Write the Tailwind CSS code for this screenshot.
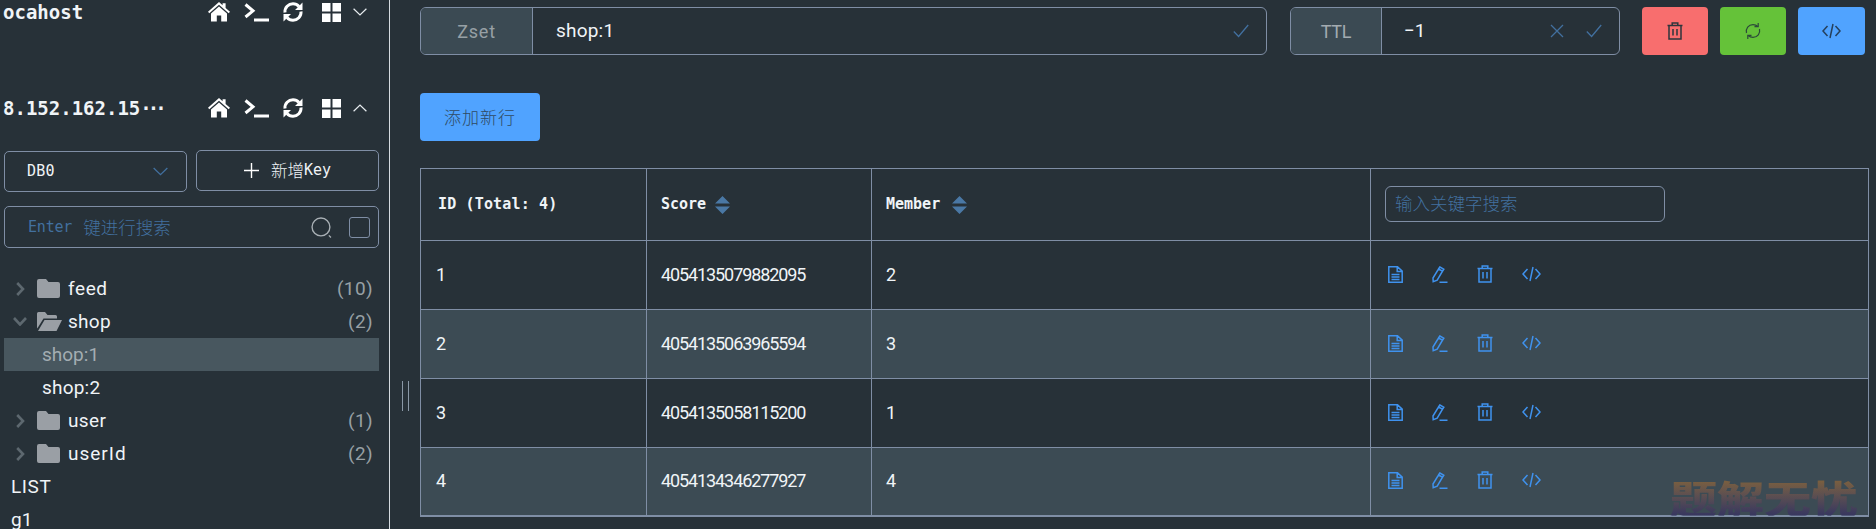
<!DOCTYPE html>
<html lang="en">
<head>
  <meta charset="UTF-8" />
  <title>Redis Desktop</title>
  <script src="https://cdn.jsdelivr.net/npm/@tailwindcss/browser@4"></script>
</head>
<body class="relative w-[1876px] h-[529px] overflow-hidden flex bg-[#273138] text-[#f0f4f7] font-['Roboto','Noto_Sans_CJK_SC',sans-serif]">

  <!-- shared icons -->
  <svg class="hidden">
    <symbol id="home" viewBox="0 0 22 20"><path fill="currentColor" d="M11 0 14.6 3.2V1.2H17.6V5.9L22 9.8 20.7 11.2 11 2.8 1.3 11.2 0 9.8ZM11 4.6 19 11.5V19.5H13.2V13.6H8.8V19.5H3V11.5Z"/></symbol>
    <symbol id="term" viewBox="0 0 25 20"><path fill="none" stroke="currentColor" stroke-width="3" d="M1.5 2.5 9 8.8 1.5 15"/><path fill="currentColor" d="M10 16.5H25V19.5H10Z"/></symbol>
    <symbol id="sync" viewBox="0 0 20 20"><path fill="none" stroke="currentColor" stroke-width="3" d="M2 10.5C1.5 5.5 5.5 1.8 10 1.8 12.5 1.8 14.5 2.8 16 4.5M18 9.5C18.5 14.5 14.5 18.2 10 18.2 7.5 18.2 5.5 17.2 4 15.5"/><path fill="currentColor" d="M19.5 0.5V8H12ZM0.5 19.5V12H8Z"/></symbol>
    <symbol id="grid" viewBox="0 0 19 19"><path fill="currentColor" d="M0 0H8.5V8.5H0ZM10.5 0H19V8.5H10.5ZM0 10.5H8.5V19H0ZM10.5 10.5H19V19H10.5Z"/></symbol>
    <symbol id="down" viewBox="0 0 14 8"><path fill="none" stroke="currentColor" stroke-width="1.2" d="M.6.8 7 7 13.4.8"/></symbol>
    <symbol id="right" viewBox="0 0 9 14"><path fill="none" stroke="currentColor" stroke-width="2.6" d="M1.2 1 7 7 1.2 13"/></symbol>
    <symbol id="folder" viewBox="0 0 23 19"><path fill="currentColor" d="M2 0H9L11.5 3H21A2 2 0 0 1 23 5V17A2 2 0 0 1 21 19H2A2 2 0 0 1 0 17V2A2 2 0 0 1 2 0Z"/></symbol>
    <symbol id="open" viewBox="0 0 25 19"><path fill="currentColor" d="M1.5 0H8L10.5 3H18.5A1.5 1.5 0 0 1 20 4.5V6.5H6.5L1.2 15 0 16.5V1.5A1.5 1.5 0 0 1 1.5 0ZM7.5 8H25L19.5 19H1Z"/></symbol>
    <symbol id="check" viewBox="0 0 16 14"><path fill="none" stroke="currentColor" stroke-width="1.3" d="M.8 7.5 5.6 12.5 15.2 1"/></symbol>
    <symbol id="close" viewBox="0 0 14 14"><path fill="none" stroke="currentColor" stroke-width="1.3" d="M1 1 13 13M13 1 1 13"/></symbol>
    <symbol id="doc" viewBox="0 0 15 17"><path fill="none" stroke="currentColor" stroke-width="1.5" d="M.8.8H9.5L14.2 5.2V16.2H.8ZM9.2.8V5.5H14M3.5 8.5H11.5M3.5 11H11.5M3.5 13.6H11.5"/></symbol>
    <symbol id="edit" viewBox="0 0 16 17"><path fill="none" stroke="currentColor" stroke-width="1.5" d="M6.5 3 10.5 5.2 5.2 14.2 1.2 15.6 1 12ZM7.8 1 11.8 3.2 10.5 5.2 6.5 3ZM7.5 16.2H15.5"/></symbol>
    <symbol id="trash" viewBox="0 0 16 18"><path fill="none" stroke="currentColor" stroke-width="1.5" d="M.5 3.5H15.5M5.2 3.5V1H10.8V3.5M2 3.5V17H14V3.5M6 7V13.5M10 7V13.5"/></symbol>
    <symbol id="code" viewBox="0 0 19 16"><path fill="none" stroke="currentColor" stroke-width="1.5" d="M5.5 3 1 8 5.5 13M13.5 3 18 8 13.5 13M11 1 8 15"/></symbol>
    <symbol id="reload" viewBox="0 0 16 18"><path fill="none" stroke="currentColor" stroke-width="1.2" d="M1.5 11C.5 6.5 3.5 2.6 8 2.6 10 2.6 11.5 3.2 13 4.5M14.5 7C15.5 11.5 12.5 15.4 8 15.4 6 15.4 4.5 14.8 3 13.5"/><path fill="none" stroke="currentColor" stroke-width="1.2" d="M13.2 1V4.7H9.5M2.8 17V13.3H6.5"/></symbol>
  </svg>

  <aside class="w-[390px] h-full shrink-0 border-r border-[#d5dbe0] overflow-hidden">
    <div class="h-6 mb-[72px] flex items-center pl-[3px]">
      <span class="w-[205px] font-['DejaVu_Sans_Mono'] font-bold text-[19px]">ocahost</span>
      <svg class="w-[22px] h-5 text-white"><use href="#home"/></svg>
      <svg class="w-[25px] h-5 ml-[14px] text-white"><use href="#term"/></svg>
      <svg class="w-5 h-5 ml-[14px] text-white"><use href="#sync"/></svg>
      <svg class="w-[19px] h-[19px] ml-[19px] text-white"><use href="#grid"/></svg>
      <svg class="w-[14px] h-2 ml-[12px] text-[#e8edf0]"><use href="#down"/></svg>
    </div>
    <div class="h-6 flex items-center pl-[3px]">
      <span class="w-[205px] font-['DejaVu_Sans_Mono'] font-bold text-[19px] whitespace-nowrap">8.152.162.15<span class="tracking-[-4px]">···</span></span>
      <svg class="w-[22px] h-5 text-white"><use href="#home"/></svg>
      <svg class="w-[25px] h-5 ml-[14px] text-white"><use href="#term"/></svg>
      <svg class="w-5 h-5 ml-[14px] text-white"><use href="#sync"/></svg>
      <svg class="w-[19px] h-[19px] ml-[19px] text-white"><use href="#grid"/></svg>
      <svg class="w-[14px] h-2 ml-[12px] rotate-180 text-[#e8edf0]"><use href="#down"/></svg>
    </div>

    <div class="mt-[30px] mx-1 flex items-start gap-[9px] w-[375px]">
      <div class="mt-px w-[183px] h-[41px] border border-[#7f8ea5] rounded-[5px] flex items-center justify-between pl-[22px] pr-[18px] text-[15px] font-['DejaVu_Sans_Mono','Noto_Sans_CJK_SC']">
        <span class="tracking-[0.2px]">DB0</span>
        <svg class="w-[15px] h-[9px] text-[#42709f]"><use href="#down"/></svg>
      </div>
      <button class="w-[183px] h-[41px] border border-[#7f8ea5] rounded-[5px] flex items-center justify-center">
        <svg class="w-[15px] h-[15px] mr-3 text-white" viewBox="0 0 15 15"><path fill="none" stroke="currentColor" stroke-width="1.4" d="M7.5 0V15M0 7.5H15"/></svg>
        <span class="text-[16.5px] font-['Noto_Sans_CJK_SC'] font-light">新增</span><span class="text-[15px] font-['DejaVu_Sans_Mono']">Key</span>
      </button>
    </div>

    <div class="mt-[14px] mx-1 w-[375px] h-[42px] border border-[#7f8ea5] rounded-[5px] flex items-center pl-[23px] text-[#42709f]">
      <span class="text-[15px] font-['DejaVu_Sans_Mono'] tracking-[-0.2px]">Enter</span>
      <span class="ml-[11px] text-[17.5px] font-light font-['Noto_Sans_CJK_SC'] w-[228px]">键进行搜索</span>
      <svg class="w-[21px] h-[21px] text-[#a9b0b5]" viewBox="0 0 20 20"><path fill="none" stroke="currentColor" stroke-width="1.3" d="M17 17.5 19 19.5M18 9.5A8.5 8.5 0 1 1 1 9.5A8.5 8.5 0 1 1 18 9.5Z"/></svg>
      <span class="ml-[17px] w-[21px] h-[21px] border border-[#7f8ea5] rounded-[3px]"></span>
    </div>

    <ul class="mt-[24px] text-[19px] leading-[33px]">
      <li class="h-[33px] flex items-center pl-4 pr-[16px]">
        <svg class="w-[9px] h-[14px] text-[#5d686f]"><use href="#right"/></svg>
        <svg class="w-[23px] h-[19px] ml-3 text-[#9a9fa5]"><use href="#folder"/></svg>
        <span class="ml-[8px] tracking-[0.6px]">feed</span>
        <span class="ml-auto text-[#97a0a5] tracking-[0.4px]">(10)</span>
      </li>
      <li class="h-[33px] flex items-center pl-[13px] pr-[16px]">
        <svg class="w-[14px] h-[9px] text-[#5d686f]" viewBox="0 0 14 9"><path fill="none" stroke="currentColor" stroke-width="2.6" d="M1 1 7 7.5 13 1"/></svg>
        <svg class="w-[25px] h-[19px] ml-[10px] text-[#9a9fa5]"><use href="#open"/></svg>
        <span class="ml-[6px] tracking-[0.3px]">shop</span>
        <span class="ml-auto text-[#97a0a5] tracking-[0.4px]">(2)</span>
      </li>
      <li class="h-[33px] mx-1 w-[375px] bg-[#48575f] pl-[38px] text-[#a3adb2]">shop:1</li>
      <li class="h-[33px] pl-[42px] tracking-[0.2px]">shop:2</li>
      <li class="h-[33px] flex items-center pl-4 pr-[16px]">
        <svg class="w-[9px] h-[14px] text-[#5d686f]"><use href="#right"/></svg>
        <svg class="w-[23px] h-[19px] ml-3 text-[#9a9fa5]"><use href="#folder"/></svg>
        <span class="ml-[8px] tracking-[0.4px]">user</span>
        <span class="ml-auto text-[#97a0a5] tracking-[0.4px]">(1)</span>
      </li>
      <li class="h-[33px] flex items-center pl-4 pr-[16px]">
        <svg class="w-[9px] h-[14px] text-[#5d686f]"><use href="#right"/></svg>
        <svg class="w-[23px] h-[19px] ml-3 text-[#9a9fa5]"><use href="#folder"/></svg>
        <span class="ml-[8px] tracking-[1px]">userId</span>
        <span class="ml-auto text-[#97a0a5] tracking-[0.4px]">(2)</span>
      </li>
      <li class="h-[33px] pl-[11px] tracking-[0.6px]">LIST</li>
      <li class="h-[33px] pl-[11px]">g1</li>
    </ul>
  </aside>

  <!-- resize handle -->
  <div class="absolute left-[402px] top-[381px] w-[7px] h-[30px] border-x border-[#8a98a6]"></div>

  <main class="flex-1 pl-[30px] pt-[7px]">
    <div class="flex items-start">
      <div class="w-[847px] h-[48px] flex border border-[#7f8ea5] rounded-[6px] overflow-hidden">
        <div class="w-[112px] border-r border-[#7f8ea5] bg-[#3b4a53] text-[#97a0a5] flex items-center justify-center text-[18px] tracking-[0.8px]">Zset</div>
        <div class="flex-1 flex items-center pl-[23px] pr-[17px] text-[19px]">
          <span class="tracking-[0.2px]">shop:1</span>
          <svg class="ml-auto w-4 h-[14px] text-[#42709f]"><use href="#check"/></svg>
        </div>
      </div>
      <div class="ml-[23px] w-[330px] h-[48px] flex border border-[#7f8ea5] rounded-[6px] overflow-hidden">
        <div class="w-[91px] border-r border-[#7f8ea5] bg-[#3b4a53] text-[#a3abb0] flex items-center justify-center text-[18px] tracking-[-0.3px]">TTL</div>
        <div class="flex-1 flex items-center pl-[22px] pr-[17px] text-[19px]">
          <span>−1</span>
          <svg class="ml-auto w-[14px] h-[14px] text-[#42709f]"><use href="#close"/></svg>
          <svg class="ml-[22px] w-4 h-[14px] text-[#42709f]"><use href="#check"/></svg>
        </div>
      </div>
      <button class="ml-[22px] w-[66px] h-[48px] bg-[#f86e6e] rounded-[4px] flex items-center justify-center text-[#2c363c]">
        <svg class="w-4 h-[18px]"><use href="#trash"/></svg>
      </button>
      <button class="ml-[12px] w-[66px] h-[48px] bg-[#65c239] rounded-[4px] flex items-center justify-center text-[#2c4a3a]">
        <svg class="w-4 h-[18px]"><use href="#reload"/></svg>
      </button>
      <button class="ml-[12px] w-[67px] h-[48px] bg-[#50a3ff] rounded-[4px] flex items-center justify-center text-[#25405c]">
        <svg class="w-[19px] h-4"><use href="#code"/></svg>
      </button>
    </div>

    <button class="mt-[38px] block w-[120px] h-[48px] bg-[#50a3ff] rounded-[4px] text-[#2f4a63] text-[17px] font-['Noto_Sans_CJK_SC'] font-light tracking-[1px]">添加新行</button>

    <table class="mt-[27px] w-[1449px] table-fixed border-collapse text-[18px] tracking-[-1.1px]">
      <colgroup><col class="w-[226px]"><col class="w-[225px]"><col class="w-[499px]"><col></colgroup>
      <thead>
        <tr class="h-[72px] font-['DejaVu_Sans_Mono'] text-[15px] tracking-normal font-bold text-left">
          <th class="border border-[#7f8ea5] pl-[17px] tracking-[0.15px]">ID (Total: 4)</th>
          <th class="border border-[#7f8ea5] pl-[14px]">
            <div class="flex items-center gap-[9px]">Score
              <svg class="w-[15px] h-[18px] text-[#4a78a5]" viewBox="0 0 15 18"><path fill="currentColor" d="M7.5 0 15 7.5H0ZM0 10.5H15L7.5 18Z"/></svg>
            </div>
          </th>
          <th class="border border-[#7f8ea5] pl-[14px]">
            <div class="flex items-center gap-[12px]">Member
              <svg class="w-[15px] h-[18px] text-[#4a78a5]" viewBox="0 0 15 18"><path fill="currentColor" d="M7.5 0 15 7.5H0ZM0 10.5H15L7.5 18Z"/></svg>
            </div>
          </th>
          <th class="border border-[#7f8ea5] pl-[14px] font-normal">
            <div class="mb-[2px] w-[280px] h-9 border border-[#7f8ea5] rounded-[6px] flex items-center pl-[9px] text-[17.5px] font-['Noto_Sans_CJK_SC'] font-light text-[#42709f]">输入关键字搜索</div>
          </th>
        </tr>
      </thead>
      <tbody>
        <tr class="h-[69px]">
          <td class="border border-[#7f8ea5] pl-[15px] pb-[2px]">1</td>
          <td class="border border-[#7f8ea5] pl-[14px] pb-[2px]">4054135079882095</td>
          <td class="border border-[#7f8ea5] pl-[14px] pb-[2px]">2</td>
          <td class="border border-[#7f8ea5] pl-[17px] pb-[2px]">
            <div class="flex items-center gap-[29px] text-[#3f92ee]">
              <svg class="w-[15px] h-[17px]"><use href="#doc"/></svg>
              <svg class="w-4 h-[17px]"><use href="#edit"/></svg>
              <svg class="w-4 h-[18px]"><use href="#trash"/></svg>
              <svg class="w-[19px] h-4"><use href="#code"/></svg>
            </div>
          </td>
        </tr>
        <tr class="h-[69px] bg-[#3c4b54]">
          <td class="border border-[#7f8ea5] pl-[15px] pb-[2px]">2</td>
          <td class="border border-[#7f8ea5] pl-[14px] pb-[2px]">4054135063965594</td>
          <td class="border border-[#7f8ea5] pl-[14px] pb-[2px]">3</td>
          <td class="border border-[#7f8ea5] pl-[17px] pb-[2px]">
            <div class="flex items-center gap-[29px] text-[#3f92ee]">
              <svg class="w-[15px] h-[17px]"><use href="#doc"/></svg>
              <svg class="w-4 h-[17px]"><use href="#edit"/></svg>
              <svg class="w-4 h-[18px]"><use href="#trash"/></svg>
              <svg class="w-[19px] h-4"><use href="#code"/></svg>
            </div>
          </td>
        </tr>
        <tr class="h-[69px]">
          <td class="border border-[#7f8ea5] pl-[15px] pb-[2px]">3</td>
          <td class="border border-[#7f8ea5] pl-[14px] pb-[2px]">4054135058115200</td>
          <td class="border border-[#7f8ea5] pl-[14px] pb-[2px]">1</td>
          <td class="border border-[#7f8ea5] pl-[17px] pb-[2px]">
            <div class="flex items-center gap-[29px] text-[#3f92ee]">
              <svg class="w-[15px] h-[17px]"><use href="#doc"/></svg>
              <svg class="w-4 h-[17px]"><use href="#edit"/></svg>
              <svg class="w-4 h-[18px]"><use href="#trash"/></svg>
              <svg class="w-[19px] h-4"><use href="#code"/></svg>
            </div>
          </td>
        </tr>
        <tr class="h-[68px] bg-[#3c4b54]">
          <td class="border border-[#7f8ea5] border-b-2 pl-[15px] pb-[2px]">4</td>
          <td class="border border-[#7f8ea5] border-b-2 pl-[14px] pb-[2px]">4054134346277927</td>
          <td class="border border-[#7f8ea5] border-b-2 pl-[14px] pb-[2px]">4</td>
          <td class="border border-[#7f8ea5] border-b-2 pl-[17px] pb-[2px]">
            <div class="flex items-center gap-[29px] text-[#3f92ee]">
              <svg class="w-[15px] h-[17px]"><use href="#doc"/></svg>
              <svg class="w-4 h-[17px]"><use href="#edit"/></svg>
              <svg class="w-4 h-[18px]"><use href="#trash"/></svg>
              <svg class="w-[19px] h-4"><use href="#code"/></svg>
            </div>
          </td>
        </tr>
      </tbody>
    </table>
  </main>

  <!-- watermark -->
  <div class="absolute left-[1670px] top-[478px] h-[47px] leading-[47px] text-[47px] font-black font-['Noto_Sans_CJK_SC'] whitespace-nowrap origin-top scale-y-[0.8] bg-gradient-to-b from-[#80623a] to-[#37365f] bg-clip-text text-transparent">题解无忧</div>

</body>
</html>
